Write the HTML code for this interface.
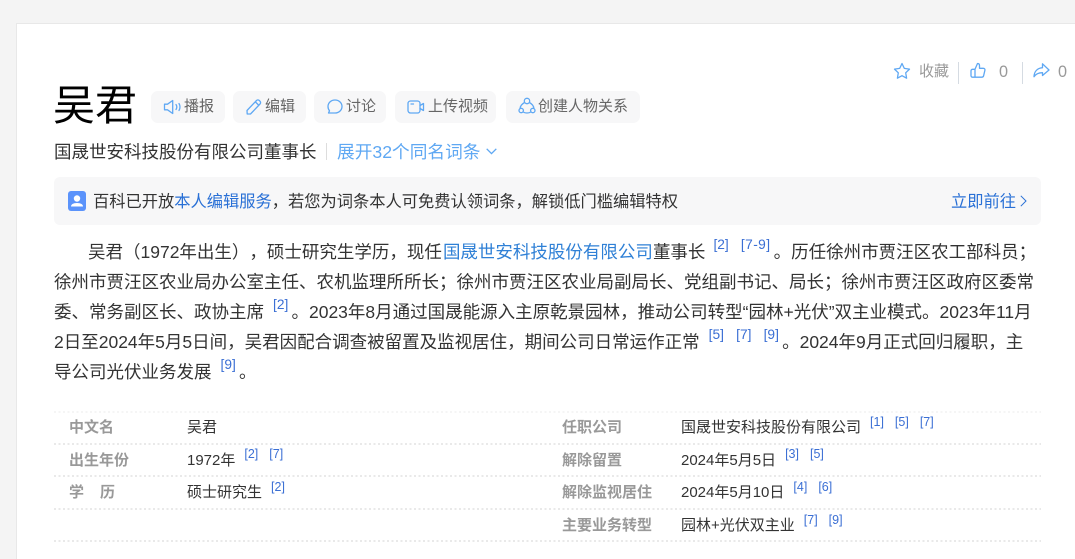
<!DOCTYPE html>
<html lang="zh-CN">
<head>
<meta charset="utf-8">
<title>吴君</title>
<style>
html,body{margin:0;padding:0;width:1075px;height:559px;overflow:hidden;background:#f4f4f4}
body{font-family:"Liberation Sans","Noto Sans CJK SC",sans-serif;color:#333;position:relative;text-spacing-trim:space-all}
*{box-sizing:border-box}
.abs,.line,.btn,.lb,.val,.dash{position:absolute;white-space:nowrap}
#card{position:absolute;left:16px;top:23px;width:1059px;height:536px;background:#fff;border:1px solid #e8e8e8;border-right:0;border-bottom:0}
#title{left:53px;top:76px;font-size:42px;line-height:60px;color:#000}
.btn{top:91px;height:32px;background:#f7f7f8;border-radius:7px;font-size:15px;line-height:32px;color:#666}
.btn svg{position:absolute;left:12px;top:7px}
.btn span{position:absolute;top:0}
#sub{left:54px;top:140px;font-size:17.5px;line-height:24px;color:#333}
#sep{left:326px;top:143px;width:1px;height:17px;background:#ddd}
#exp{left:337px;top:140px;font-size:17.7px;line-height:24px;color:#5fa8f3}
#notice{left:54px;top:177px;width:987px;height:48px;background:#f7f7f8;border-radius:6px}
#nt{left:93px;top:190px;font-size:16.25px;line-height:24px;color:#333}
#go{left:951px;top:190px;font-size:16.25px;line-height:24px;color:#2970d6}
.line{left:54px;font-size:17.5px;line-height:30px;color:#333}
a{color:#2f80d6;text-decoration:none}
sup{font-size:13.75px;color:#3b6fd4;line-height:0;position:relative;top:-9px;vertical-align:baseline;margin-left:9px;margin-right:3.2px}
.lb{font-size:15px;line-height:20px;font-weight:700;color:#999}
.val{font-size:15px;line-height:20px;color:#333}
.val sup{font-size:12.5px;top:-6.5px;margin-left:9px;margin-right:2px;color:#3b6fd4}
.dash{height:2px;background:repeating-linear-gradient(90deg,#e9e9e9 0 2px,transparent 2px 4.5px)}
.top{top:62px;font-size:15px;line-height:20px;color:#999}
.vs{position:absolute;top:62px;width:1px;height:22px;background:#d5dbe2}
</style>
</head>
<body>
<div id="card"></div>

<div class="abs" id="title">吴君</div>

<div class="btn" style="left:151px;width:74px">
<svg width="19" height="18" viewBox="0 0 19 18" fill="none" stroke="#5fa8f3" stroke-width="1.3"><path d="M1.5 6.200v5.600h3l5.200 3.700V2.500L4.500 6.200z" stroke-linejoin="round"/><path d="M13 6.500c1 1.500 1 3.500 0 5M16 5.500c1.300 2 1.300 5 0 7" stroke-linecap="round"/></svg>
<span style="left:33px">播报</span></div>

<div class="btn" style="left:233px;width:73px">
<svg width="18" height="18" viewBox="0 0 18 18" fill="none" stroke="#5fa8f3" stroke-width="1.3"><path d="M2 12.500L11.500 2.500c.8-.8 2-.8 2.800 0l.7.700c.8.800.8 2 0 2.800L5.500 16H2.200z" stroke-linejoin="round"/><path d="M10.500 4l3.500 3.500"/></svg>
<span style="left:32px">编辑</span></div>

<div class="btn" style="left:314px;width:72px">
<svg width="18" height="18" viewBox="0 0 18 18" fill="none" stroke="#5fa8f3" stroke-width="1.3"><path d="M9 2c3.900 0 7 2.900 7 6.500S12.900 15 9 15H2.500l1-2.200C2.500 11.600 2 10.100 2 8.500 2 4.900 5.100 2 9 2z" stroke-linejoin="round"/></svg>
<span style="left:32px">讨论</span></div>

<div class="btn" style="left:395px;width:101px">
<svg width="18" height="18" viewBox="0 0 18 18" fill="none" stroke="#5fa8f3" stroke-width="1.3"><rect x="1" y="3" width="12" height="12" rx="2.500"/><path d="M13 7.500l3.500-2v7l-3.500-2M4 6h2.500" stroke-linejoin="round" stroke-linecap="round"/></svg>
<span style="left:33px">上传视频</span></div>

<div class="btn" style="left:506px;width:134px">
<svg width="18" height="19" viewBox="0 0 18 19" fill="none" stroke="#5fa8f3" stroke-width="1.3" style="top:6px"><circle cx="9" cy="4" r="2.700"/><circle cx="3.200" cy="13.500" r="2.200"/><circle cx="14.800" cy="13.500" r="2.200"/><path d="M5.400 15.200c2.200 1 5 1 7.200 0M6.600 5.500C3.800 7 2.300 8.800 2.100 11.400M11.400 5.500c2.800 1.500 4.300 3.300 4.500 5.900"/></svg>
<span style="left:32px">创建人物关系</span></div>

<svg class="abs" style="left:893px;top:62px" width="18" height="18" viewBox="0 0 18 18" fill="none" stroke="#5fa8f3" stroke-width="1.300"><path d="M9 1.500l2.300 4.900 5.200.7-3.800 3.700.9 5.400L9 13.700l-4.600 2.500.9-5.400L1.500 7.100l5.200-.7z" stroke-linejoin="round"/></svg>
<div class="abs top" style="left:919px">收藏</div>
<div class="vs" style="left:958px"></div>
<svg class="abs" style="left:970px;top:62px" width="16" height="17" viewBox="0 0 16 17" fill="none" stroke="#5fa8f3" stroke-width="1.300"><path d="M5 7.300L7.500 1.500c1.300 0 2 .8 2 2V6.300h3.800c1.200 0 1.900.9 1.600 2l-1.300 5.500c-.2.800-.9 1.400-1.800 1.400H2.500c-.8 0-1.500-.7-1.500-1.500V8.700c0-.8.700-1.400 1.500-1.400zM5 7.300v7.900" stroke-linejoin="round"/></svg>
<div class="abs top" style="left:999px;font-size:16.25px">0</div>
<div class="vs" style="left:1022px"></div>
<svg class="abs" style="left:1033px;top:62px" width="17" height="17" viewBox="0 0 17 17" fill="none" stroke="#5fa8f3" stroke-width="1.300"><path d="M9.500 1.800L16 8l-6.500 5.500V10.700c-3.500 0-6.300.8-8.500 4 .2-5 3-8.500 8.500-9z" stroke-linejoin="round"/></svg>
<div class="abs top" style="left:1058px;font-size:16.25px">0</div>

<div class="abs" id="sub">国晟世安科技股份有限公司董事长</div>
<div class="abs" id="sep"></div>
<div class="abs" id="exp">展开32个同名词条<svg style="margin-left:5px;vertical-align:3px" width="11" height="7" viewBox="0 0 11 7" fill="none" stroke="#5fa8f3" stroke-width="1.300"><path d="M.7.800l4.800 4.800L10.300.8"/></svg></div>

<div class="abs" id="notice"></div>
<svg class="abs" style="left:68px;top:191px" width="18" height="20" viewBox="0 0 18 20"><rect width="18" height="20" rx="3" fill="#5b93fb"/><circle cx="9" cy="7.500" r="3.200" fill="#fff"/><path d="M3 15.500c0-2 2-3.500 6-3.500s6 1.500 6 3.500z" fill="#fff"/></svg>
<div class="abs" id="nt">百科已开放<a href="#" style="color:#2970d6">本人编辑服务</a>，若您为词条本人可免费认领词条，解锁低门槛编辑特权</div>
<div class="abs" id="go">立即前往<svg style="margin-left:4px;vertical-align:0" width="7" height="12" viewBox="0 0 7 12" fill="none" stroke="#2970d6" stroke-width="1"><path d="M.8.800L6 6 .8 11.200"/></svg></div>

<div class="line" style="top:237px;left:88px">吴君（1972年出生），硕士研究生学历，现任<a href="#" style="margin-left:1px">国晟世安科技股份有限公司</a>董事长<sup style="margin-left:8px">[2]</sup><sup style="letter-spacing:.4px">[7-9]</sup>。历任徐州市贾汪区农工部科员；</div>
<div class="line" style="top:267px">徐州市贾汪区农业局办公室主任、农机监理所所长；徐州市贾汪区农业局副局长、党组副书记、局长；徐州市贾汪区政府区委常</div>
<div class="line" style="top:297px">委、常务副区长、政协主席<sup>[2]</sup>。2023年8月通过国晟能源入主原乾景园林，推动公司转型“园林+光伏”双主业模式。2023年11月</div>
<div class="line" style="top:327px">2日至2024年5月5日间，吴君因配合调查被留置及监视居住，期间公司日常运作正常<sup>[5]</sup><sup>[7]</sup><sup>[9]</sup>。2024年9月正式回归履职，主</div>
<div class="line" style="top:357px">导公司光伏业务发展<sup>[9]</sup>。</div>

<div class="dash" style="left:54px;top:411px;width:987px;opacity:.45"></div>
<div class="dash" style="left:54px;top:443px;width:987px"></div>
<div class="dash" style="left:54px;top:475px;width:987px"></div>
<div class="dash" style="left:54px;top:508px;width:987px"></div>
<div class="dash" style="left:54px;top:540px;width:987px"></div>

<div class="lb" style="left:69px;top:418px">中文名</div>
<div class="val" style="left:187px;top:418px">吴君</div>
<div class="lb" style="left:69px;top:451px">出生年份</div>
<div class="val" style="left:187px;top:451px">1972年<sup style="top:-7.500px">[2]</sup><sup style="top:-7.500px">[7]</sup></div>
<div class="lb" style="left:69px;top:483px">学<span style="margin-left:16px">历</span></div>
<div class="val" style="left:187px;top:483px">硕士研究生<sup>[2]</sup></div>

<div class="lb" style="left:562px;top:418px">任职公司</div>
<div class="val" style="left:681px;top:418px">国晟世安科技股份有限公司<sup>[1]</sup><sup>[5]</sup><sup>[7]</sup></div>
<div class="lb" style="left:562px;top:451px">解除留置</div>
<div class="val" style="left:681px;top:451px">2024年5月5日<sup style="top:-7.500px">[3]</sup><sup style="top:-7.500px">[5]</sup></div>
<div class="lb" style="left:562px;top:483px">解除监视居住</div>
<div class="val" style="left:681px;top:483px">2024年5月10日<sup>[4]</sup><sup>[6]</sup></div>
<div class="lb" style="left:562px;top:516px">主要业务转型</div>
<div class="val" style="left:681px;top:516px">园林+光伏双主业<sup>[7]</sup><sup>[9]</sup></div>
</body>
</html>
